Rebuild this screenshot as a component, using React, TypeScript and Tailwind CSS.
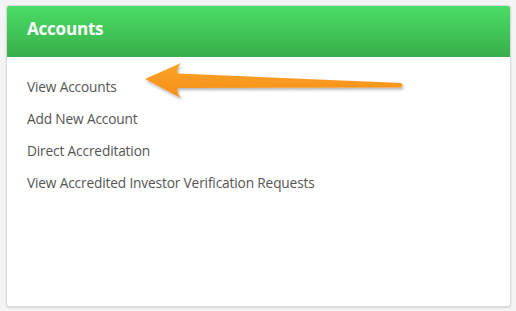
import React from 'react'

const links = [
  'View Accounts',
  'Add New Account',
  'Direct Accreditation',
  'View Accredited Investor Verification Requests',
]

function Arrow() {
  return (
    <svg
      className="absolute left-[131px] top-[52px] pointer-events-none"
      width="272"
      height="50"
      viewBox="0 0 272 50"
      aria-hidden="true"
    >
      <defs>
        <filter id="sh" x="-10%" y="-30%" width="120%" height="160%">
          <feDropShadow dx="1" dy="2" stdDeviation="1.5" floodColor="#000" floodOpacity="0.3" />
        </filter>
        <linearGradient id="og" x1="0" y1="0" x2="0" y2="1">
          <stop offset="0" stopColor="#fba32a" />
          <stop offset="1" stopColor="#f68f17" />
        </linearGradient>
      </defs>
      <path
        d="M7 21 L43 5 Q38 11 40 15.5 L263 25 Q266 27 263 29.5 L40 30 Q38 35 43 40 Z"
        fill="url(#og)"
        filter="url(#sh)"
      />
    </svg>
  )
}

export default function App() {
  return (
    <div className="w-[516px] h-[311px] bg-[#f4f4f4] pt-[5px] pl-[6px]">
      <div className="relative w-[505px] h-[302px] bg-white rounded-[3px] border border-[#dadada] shadow-[0_1px_2px_rgba(0,0,0,0.12)] overflow-hidden">
        <div className="h-[51px] bg-gradient-to-b from-[#4bde66] to-[#39ae4b] flex items-center pl-[20px] pb-[5px]">
          <h2 className="text-white font-bold text-[17px] tracking-[-0.2px] font-['Open_Sans',sans-serif]">
            Accounts
          </h2>
        </div>
        <ul className="pt-[20px] pl-[20px] flex flex-col gap-[13px] font-['Open_Sans',sans-serif] text-[13.7px] text-[#555] leading-[19px]">
          {links.map((l) => (
            <li key={l}>
              <a href="#" className="tracking-[-0.15px]">{l}</a>
            </li>
          ))}
        </ul>
        <Arrow />
      </div>
    </div>
  )
}
